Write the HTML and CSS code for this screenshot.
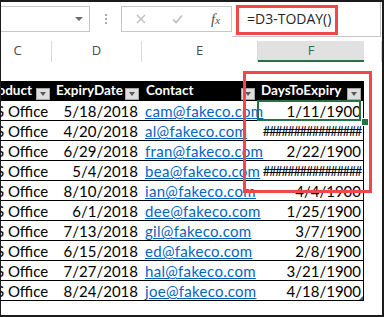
FILE: index.html
```html
<!DOCTYPE html>
<html lang="en">
<head>
    <title>DaysToExpiry</title>
    <link rel="stylesheet" href="styles.css">
</head>
<body>
   <div class="window">
    <div class="formula-bar">
        <div class="name-box"><span class="caret"></span></div>
        <div class="grip"><i></i><i></i><i></i></div>
        <div class="fx-box">
            <svg class="ico" width="10" height="10" viewBox="0 0 10 10"><path d="M1 1 L9 9 M9 1 L1 9" stroke="#bdbdbd" stroke-width="1.4" fill="none"/></svg>
            <svg class="ico" width="11" height="10" viewBox="0 0 11 10"><path d="M1 5.5 L4 8.5 L10 1.5" stroke="#bdbdbd" stroke-width="1.6" fill="none"/></svg>
            <span class="fx">f<span>x</span></span>
        </div>
        <div class="formula">=D3-TODAY()</div>
    </div>

    <div class="col-heads">
        <div>C</div>
        <div>D</div>
        <div>E</div>
        <div class="active">F</div>
        <div></div>
    </div>

    <div class="sheet">
        <div class="blank"></div>

        <div class="th th-c"><span>Product</span><b class="filter"></b></div>
        <div class="th"><span>ExpiryDate</span><b class="filter"></b></div>
        <div class="th"><span>Contact</span><b class="filter"></b></div>
        <div class="th th-f"><span>DaysToExpiry</span><b class="filter"></b></div>
        <div class="g"></div>

        <div class="td prod">MS Office</div><div class="td num">5/18/2018</div><div class="td mail"><a>cam@fakeco.com</a></div><div class="td num f sel">1/11/1900</div><div class="g"></div>
        <div class="td prod">MS Office</div><div class="td num">4/20/2018</div><div class="td mail"><a>al@fakeco.com</a></div><div class="td num f hash">################</div><div class="g"></div>
        <div class="td prod">MS Office</div><div class="td num">6/29/2018</div><div class="td mail"><a>fran@fakeco.com</a></div><div class="td num f">2/22/1900</div><div class="g"></div>
        <div class="td prod">MS Office</div><div class="td num">5/4/2018</div><div class="td mail"><a>bea@fakeco.com</a></div><div class="td num f hash">################</div><div class="g"></div>
        <div class="td prod">MS Office</div><div class="td num">8/10/2018</div><div class="td mail"><a>ian@fakeco.com</a></div><div class="td num f">4/4/1900</div><div class="g"></div>
        <div class="td prod">MS Office</div><div class="td num">6/1/2018</div><div class="td mail"><a>dee@fakeco.com</a></div><div class="td num f">1/25/1900</div><div class="g"></div>
        <div class="td prod">MS Office</div><div class="td num">7/13/2018</div><div class="td mail"><a>gil@fakeco.com</a></div><div class="td num f">3/7/1900</div><div class="g"></div>
        <div class="td prod">MS Office</div><div class="td num">6/15/2018</div><div class="td mail"><a>ed@fakeco.com</a></div><div class="td num f">2/8/1900</div><div class="g"></div>
        <div class="td prod">MS Office</div><div class="td num">7/27/2018</div><div class="td mail"><a>hal@fakeco.com</a></div><div class="td num f">3/21/1900</div><div class="g"></div>
        <div class="td prod">MS Office</div><div class="td num">8/24/2018</div><div class="td mail"><a>joe@fakeco.com</a></div><div class="td num f last">4/18/1900</div><div class="g"></div>
    </div>

    <!-- red annotation boxes -->
    <div class="callout callout-formula"></div>
    <div class="callout callout-col"></div>
   </div>
</body>
</html>
```

FILE: styles.css
```css
*{
    box-sizing: border-box;
}
body{
    margin: 0;
    padding: 0;
    background: #fff;
}
.window{
    position: relative;
    width: 384px;
    height: 317px;
    overflow: hidden;
    background: #fff;
    border: 2px solid #1b1b1b;
    border-left-width: 1px;
    font-family: Lato, "Open Sans", sans-serif;
}
/* Formula bar */
.formula-bar{
    display: flex;
    align-items: flex-start;
    height: 35px;
}
.name-box{
    margin: 4px 0 0 -1px;
    width: 90px;
    height: 26px;
    border: 1px solid #c6c6c6;
    display: flex;
    justify-content: flex-end;
    align-items: center;
    padding-right: 6px;
}
.caret{
    width: 0;
    height: 0;
    border-left: 4px solid transparent;
    border-right: 4px solid transparent;
    border-top: 4px solid #6b6b6b;
}
.grip{
    width: 31px;
    height: 35px;
    display: flex;
    flex-direction: column;
    align-items: center;
    gap: 2px;
    padding-top: 12px;
}
.grip i{
    width: 2px;
    height: 2px;
    background: #a9a9a9;
}
.fx-box{
    margin-top: 4px;
    width: 111px;
    height: 26px;
    border: 1px solid #c6c6c6;
    display: flex;
    align-items: center;
    padding-left: 14px;
    gap: 26px;
}
.fx{
    font-family: "Liberation Serif", serif;
    font-style: italic;
    font-size: 15px;
    color: #505050;
    margin-left: 2px;
}
.fx span{
    font-size: 11px;
}
.formula{
    flex: 1;
    height: 35px;
    margin-right: 1px;
    border-right: 1px solid #c6c6c6;
    border-bottom: 1px solid #c6c6c6;
    padding: 7px 0 0 15px;
    font-family: "Open Sans", sans-serif;
    font-size: 14px;
    line-height: 20px;
    color: #262626;
}
/* Column letters */
.col-heads{
    display: grid;
    grid-template-columns: 68px 90px 116px 106px 1fr;
    margin-left: -17px;
    padding-top: 4px;
    height: 24px;
}
.col-heads div{
    text-align: center;
    font-family: "Open Sans", sans-serif;
    font-size: 13px;
    line-height: 19px;
    color: #4a4a4a;
    border-right: 1px solid #dadada;
}
.col-heads .active{
    background: #e1e1e1;
    color: #217346;
    border-bottom: 2px solid #217346;
    border-right: none;
}
/* Sheet cells */
.sheet{
    display: grid;
    grid-template-columns: 68px 90px 116px 106px 1fr;
    margin-left: -17px;
}
.blank{
    grid-column: 1 / -1;
    height: 20px;
}
.th{
    height: 20px;
    background: #000;
    color: #fff;
    font-weight: bold;
    font-size: 13.5px;
    display: flex;
    justify-content: space-between;
    align-items: flex-end;
    padding: 0 3px 1px 4px;
    white-space: nowrap;
    overflow: hidden;
}
.th span{
    line-height: 17px;
    padding-bottom: 1px;
}
.th-c{
    justify-content: flex-end;
    gap: 4px;
    padding-right: 2px;
}
.th-c span{
    flex-shrink: 0;
}
.th-f{
    padding-left: 3px;
    padding-right: 3px;
}
.filter{
    flex-shrink: 0;
    width: 14px;
    height: 12px;
    background: #dedede;
    border: 1px solid #a6a6a6;
    display: flex;
    justify-content: center;
    align-items: center;
}
.filter::after{
    content: "";
    border-left: 3.5px solid transparent;
    border-right: 3.5px solid transparent;
    border-top: 4px solid #595959;
}
.td{
    height: 20px;
    border-bottom: 1px solid #000;
    padding: 2px 3px 0 3px;
    font-size: 15px;
    line-height: 17px;
    color: #000;
    white-space: nowrap;
    overflow: hidden;
}
.prod{
    padding-left: 0;
    text-indent: -2px;
}
.num{
    text-align: right;
    padding-right: 4px;
}
.mail{
    overflow: visible;
    padding-right: 0;
}
.td.f{
    border-right: 1px solid #000;
    padding-right: 2px;
    overflow: visible;
}
.hash{
    font-size: 13px;
    letter-spacing: -1.4px;
}
.td a{
    color: #0563c1;
    text-decoration: underline;
    letter-spacing: 0.3px;
}
.g{
    height: 20px;
}
/* Active cell */
.sel{
    position: relative;
}
.sel::before{
    content: "";
    position: absolute;
    left: -1px;
    top: -1px;
    right: 2px;
    bottom: -1px;
    border: 2px solid #217346;
}
.sel::after{
    content: "";
    position: absolute;
    left: 103px;
    top: 17px;
    width: 6px;
    height: 6px;
    background: #217346;
    border: 1px solid #fff;
}
.last{
    position: relative;
}
.last::after{
    content: "";
    position: absolute;
    right: 0;
    bottom: 0;
    border-left: 4px solid transparent;
    border-bottom: 4px solid #3f5a8a;
}
/* Red annotation boxes */
.callout{
    position: absolute;
    border: 3px solid #f04848;
}
.callout-formula{
    left: 235px;
    top: 3px;
    width: 102px;
    height: 30px;
}
.callout-col{
    left: 242px;
    top: 69px;
    width: 129px;
    height: 122px;
}
```
